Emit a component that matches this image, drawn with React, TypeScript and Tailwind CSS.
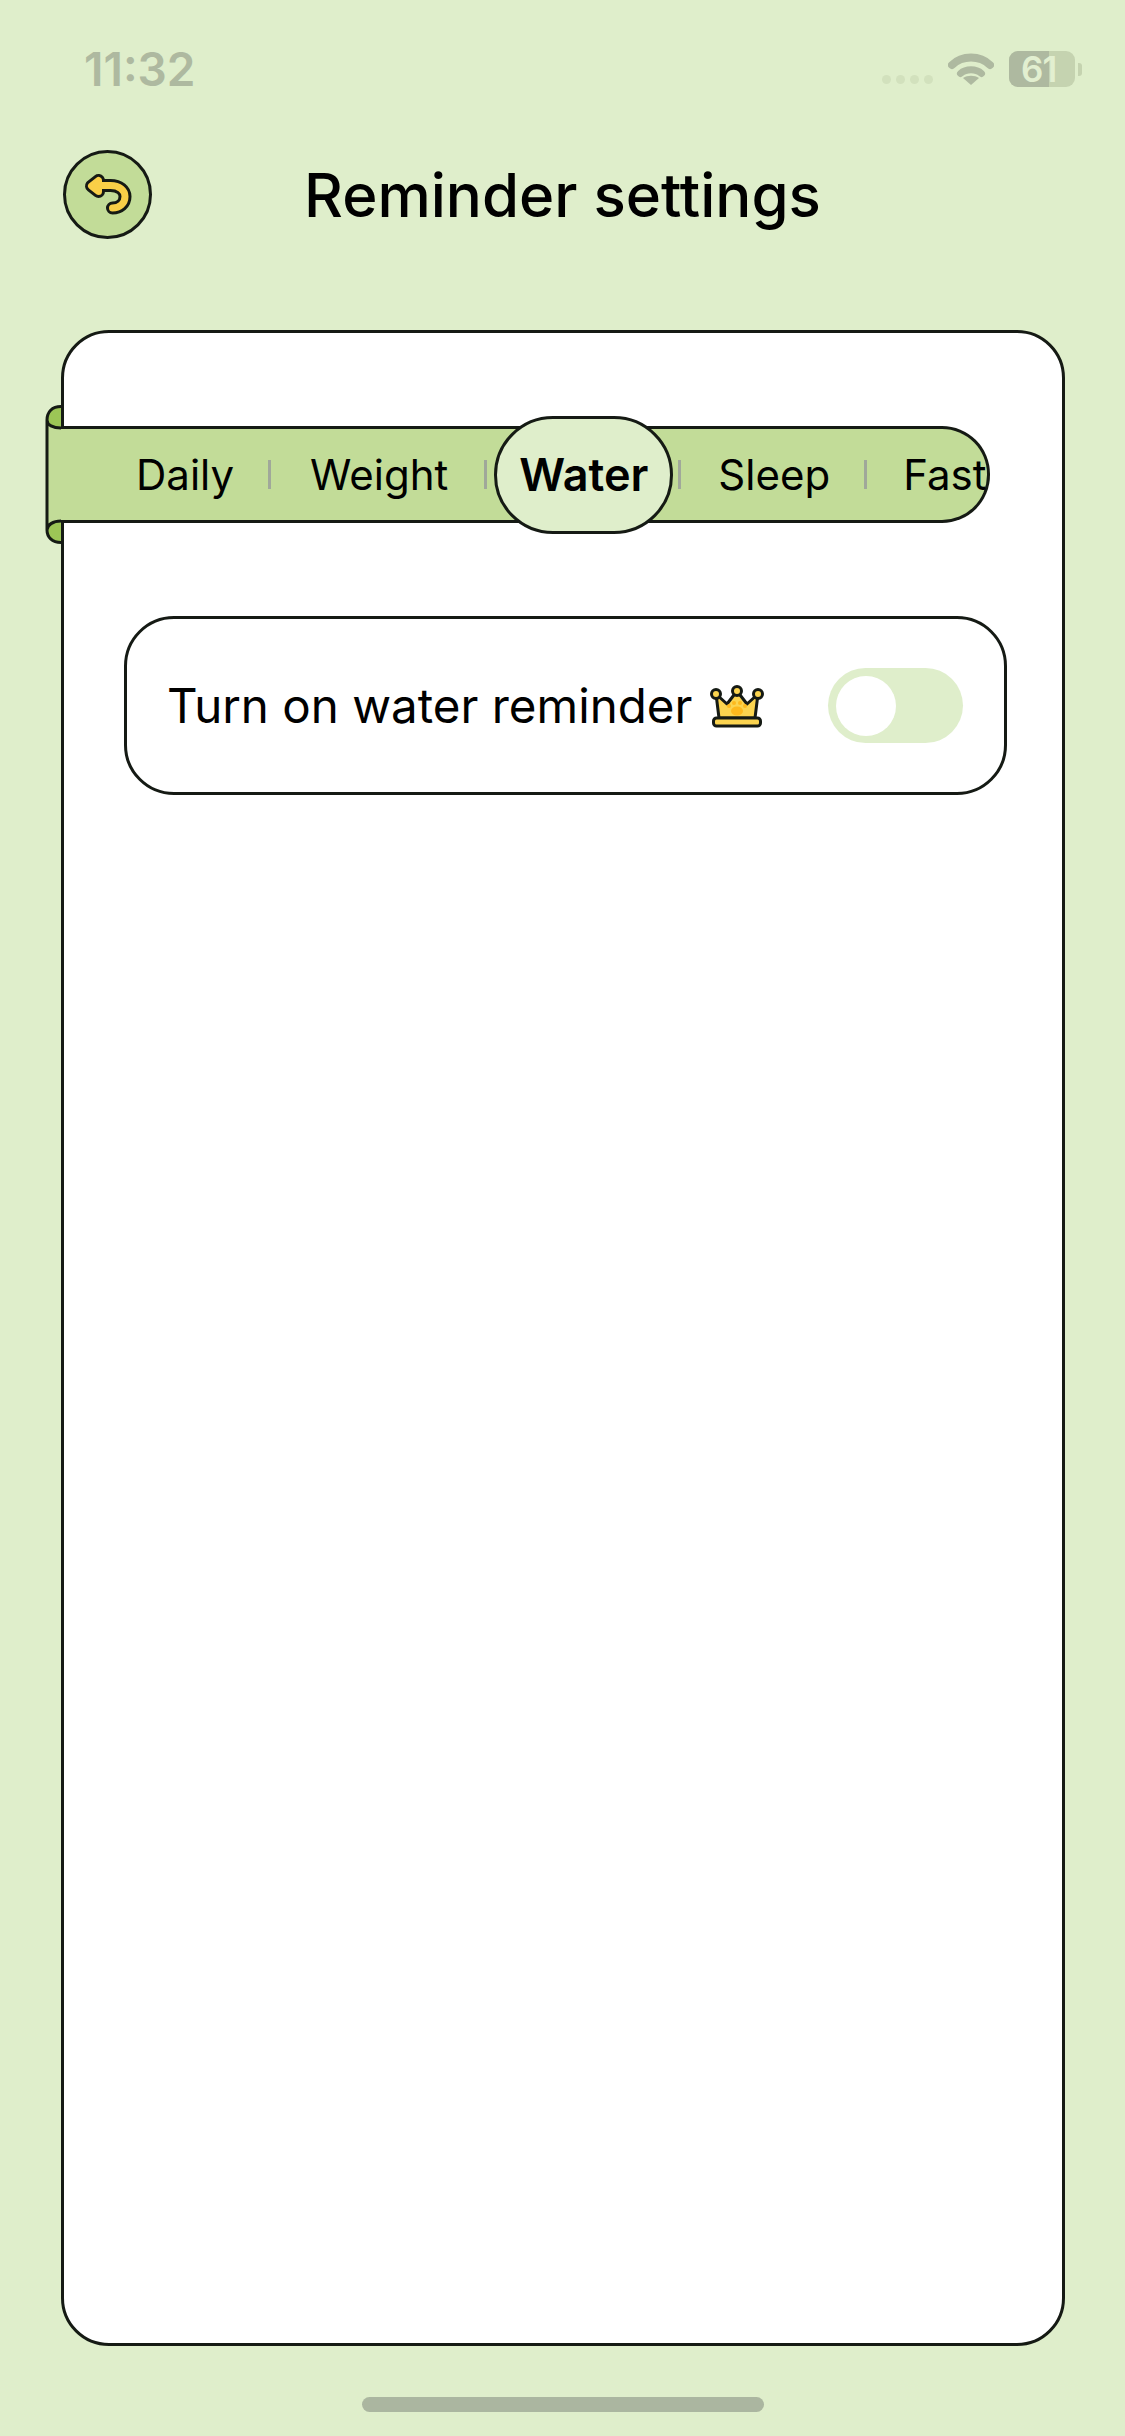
export default function App() {
  return (
    <div className="flex h-[2436px] w-[1125px] flex-col overflow-hidden bg-[#dfeecb] font-[family-name:Inter,sans-serif] text-black">
      {/* Status bar */}
      <div className="flex h-[138px] items-start justify-between pl-[84px] pr-[43px] pt-[46px]">
        <span className="text-[46px] font-semibold leading-[46px] text-[#aeb9a0]">11:32</span>
        <div className="flex items-start pt-[5px]">
          <div className="mr-[15px] mt-[24px] flex gap-[5px]">
            <span className="h-[9px] w-[9px] rounded-full bg-[#d2e1bd]" />
            <span className="h-[9px] w-[9px] rounded-full bg-[#d2e1bd]" />
            <span className="h-[9px] w-[9px] rounded-full bg-[#d2e1bd]" />
            <span className="h-[9px] w-[9px] rounded-full bg-[#d2e1bd]" />
          </div>
          <svg width="46" height="34" viewBox="0 0 46 34" className="mr-[15px]">
            <path d="M4 14 C14 4 32 4 42 14" fill="none" stroke="#aeb9a0" strokeWidth="8" strokeLinecap="round" />
            <path d="M12.5 22.5 C18 17.5 28 17.5 33.5 22.5" fill="none" stroke="#aeb9a0" strokeWidth="7" strokeLinecap="round" />
            <path d="M23 34 L15 27 C19.500 24 26.500 24 31 27 Z" fill="#aeb9a0" />
          </svg>
          <div className="flex items-center">
            <div className="relative flex h-[36px] w-[66px] items-center rounded-[9px] bg-[#c5d3b0]">
              <div className="h-full w-[40px] rounded-l-[9px] bg-[#aeb9a0]" />
              <span className="absolute left-[12px] top-0 text-[35px] font-semibold leading-[36px] tracking-[-1px] text-[#e2efd0]">61</span>
            </div>
            <div className="ml-[3px] h-[13px] w-[4px] rounded-r-[3px] bg-[#c5d3b0]" />
          </div>
        </div>
      </div>

      {/* Header */}
      <div className="grid h-[192px] grid-cols-[1fr_auto_1fr] items-start px-[63px] pt-[12px]">
        <button className="flex h-[89px] w-[89px] items-center justify-center rounded-full border-[3px] border-[#151a14] bg-[#c2dc98]">
          <svg width="60" height="60" viewBox="77.5 164.5 60 60" fill="none" strokeLinecap="round" strokeLinejoin="round">
            <path d="M91 185.500 L98 180 V191 Z" fill="#151a14" stroke="#151a14" strokeWidth="13" />
            <path d="M98 185 H110 C119 185 124.500 190 124.500 196 C124.500 203 119 207.500 112 207.500" stroke="#151a14" strokeWidth="13" />
            <path d="M91 185.500 L98 180 V191 Z" fill="#f9cf47" stroke="#f9cf47" strokeWidth="7" />
            <path d="M98 185 H110 C119 185 124.500 190 124.500 196 C124.500 203 119 207.500 112 207.500" stroke="#f9cf47" strokeWidth="7" />
          </svg>
        </button>
        <h1 className="pt-[12px] text-[60px] font-medium leading-[66px]">Reminder settings</h1>
        <div />
      </div>

      {/* Main card */}
      <div className="mx-[61px] h-[2016px] w-[1004px] rounded-[48px] border-[3px] border-[#151a14] bg-white pt-[93px]">
        {/* Ribbon tabs */}
        <div className="relative -ml-[3px] flex h-[97px] w-[929px] items-center rounded-r-[48px] border-y-[3px] border-r-[3px] border-[#151a14] bg-[#c2dc98] pl-[75px] text-[42px] leading-[52px]">
          <svg width="17" height="139" viewBox="0 0 17 139" fill="none" className="absolute -left-[16px] -top-[24px]">
            <path d="M16 1.500 C7 1.500 2 7 2 15 C2 20 8 23 16 23 Z" fill="#9cc656" />
            <path d="M16 116 C8 116 2 120 2 125 C2 132 7 137.500 16 137.500 Z" fill="#9cc656" />
            <path d="M2 15 C2 20 8 23 16 23 V116 C8 116 2 120 2 125 Z" fill="#c2dc98" />
            <path
              d="M16 1.500 C7 1.500 2 7 2 15 V125 C2 132 7 137.500 16 137.500 M2 15 C2 20 8 23 16 23 M16 116 C8 116 2 120 2 125"
              stroke="#151a14"
              strokeWidth="3"
            />
          </svg>
          <span className="shrink-0">Daily</span>
          <span className="ml-[34px] mr-[39px] h-[29px] w-[3px] shrink-0 bg-[#a0a89a]" />
          <span className="shrink-0">Weight</span>
          <span className="ml-[36px] mr-[7px] h-[29px] w-[3px] shrink-0 bg-[#a0a89a]" />
          <span className="relative z-10 -my-[13px] flex h-[118px] w-[179px] shrink-0 items-center justify-center rounded-[59px] border-[3px] border-[#151a14] bg-[#dfeecb] text-[45px] font-semibold">
            Water
          </span>
          <span className="ml-[5px] mr-[37px] h-[29px] w-[3px] shrink-0 bg-[#a0a89a]" />
          <span className="shrink-0">Sleep</span>
          <span className="ml-[34px] mr-[36px] h-[29px] w-[3px] shrink-0 bg-[#a0a89a]" />
          <span className="shrink-0">Fast</span>
        </div>

        {/* Water reminder row */}
        <div className="ml-[60px] mt-[93px] flex h-[179px] w-[883px] items-center rounded-[50px] border-[3px] border-[#151a14] pl-[40px] pr-[41px]">
          <span className="text-[47.500px] leading-[56px]">Turn on water reminder</span>
          <svg width="56" height="44" viewBox="0 0 56 44" className="ml-[17px]">
            <path
              d="M10 34 L7 10 L18 20 L28 7 L38 20 L49 10 L46 34 Z"
              fill="#fbd44f"
              stroke="#151a14"
              strokeWidth="3"
              strokeLinejoin="round"
            />
            <circle cx="7" cy="10" r="4.500" fill="#fbd44f" stroke="#151a14" strokeWidth="3" />
            <circle cx="28" cy="7" r="4.500" fill="#fbd44f" stroke="#151a14" strokeWidth="3" />
            <circle cx="49" cy="10" r="4.500" fill="#fbd44f" stroke="#151a14" strokeWidth="3" />
            <rect x="4.500" y="34" width="47" height="8" rx="3" fill="#fbd44f" stroke="#151a14" strokeWidth="3" />
            <ellipse cx="28" cy="27" rx="6" ry="4.500" fill="#fdb91d" />
            <circle cx="20" cy="22" r="2" fill="#fdb91d" />
            <circle cx="25" cy="19" r="2" fill="#fdb91d" />
            <circle cx="31" cy="19" r="2" fill="#fdb91d" />
            <circle cx="36" cy="22" r="2" fill="#fdb91d" />
          </svg>
          <div className="ml-auto flex h-[75px] w-[135px] shrink-0 items-center rounded-full bg-[#dfeecb] pl-[8px]">
            <div className="h-[60px] w-[60px] rounded-full bg-white" />
          </div>
        </div>
      </div>

      {/* Home indicator */}
      <div className="mx-auto mt-[51px] h-[15px] w-[402px] rounded-[8px] bg-[#abb6a0]" />
    </div>
  );
}
